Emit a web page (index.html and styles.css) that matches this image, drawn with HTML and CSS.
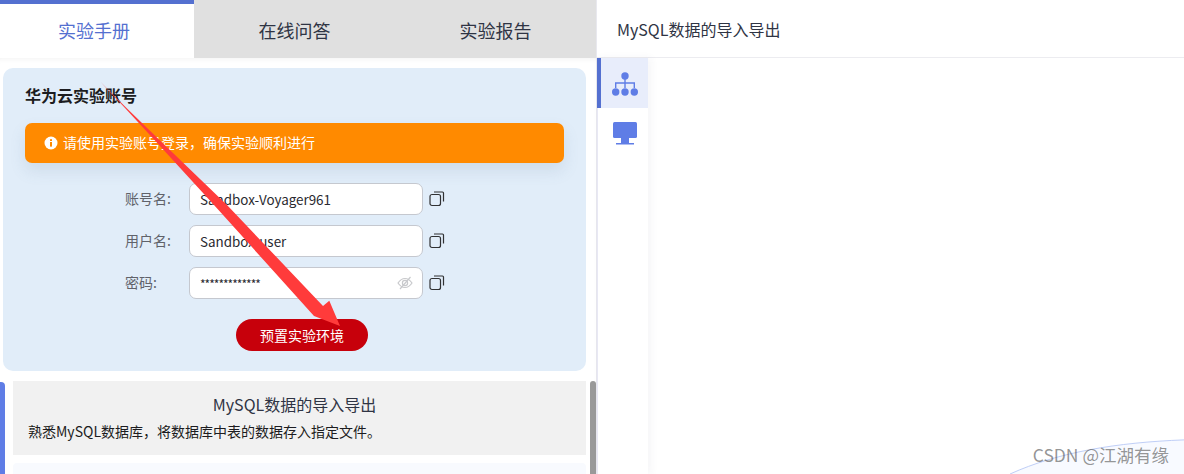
FILE: index.html
```html
<!DOCTYPE html>
<html lang="zh-CN">
<head>
<meta charset="utf-8">
<title>MySQL数据的导入导出</title>
<link rel="stylesheet" href="styles.css">
</head>
<body>
<div class="app">
  <section class="left">
    <nav class="tabs">
      <div class="tab active">实验手册</div>
      <div class="tab-rest">
        <div class="tab">在线问答</div>
        <div class="tab">实验报告</div>
      </div>
    </nav>
    <div class="left-body">
      <div class="account">
        <h2 class="account-title">华为云实验账号</h2>
        <div class="alert">
          <svg class="alert-icon" viewBox="0 0 14 14"><circle cx="7" cy="7" r="6.5" fill="#fff"/><rect x="6" y="6" width="2" height="4.6" fill="#ff8a00"/><rect x="6" y="3.2" width="2" height="1.8" fill="#ff8a00"/></svg>
          <span>请使用实验账号登录&#xFF0C;确保实验顺利进行</span>
        </div>
        <div class="form">
          <div class="row">
            <label class="label">账号名:</label>
            <div class="input">Sandbox-Voyager961</div>
            <svg class="copy" viewBox="0 0 16 16"><rect x="1" y="3.5" width="10.500" height="11" rx="2" fill="none" stroke="#303133" stroke-width="1.200"/><path d="M5 1h8.500a1 1 0 0 1 1 1v8.500" fill="none" stroke="#303133" stroke-width="1.200"/></svg>
          </div>
          <div class="row">
            <label class="label">用户名:</label>
            <div class="input">Sandbox-user</div>
            <svg class="copy" viewBox="0 0 16 16"><rect x="1" y="3.5" width="10.500" height="11" rx="2" fill="none" stroke="#303133" stroke-width="1.200"/><path d="M5 1h8.500a1 1 0 0 1 1 1v8.500" fill="none" stroke="#303133" stroke-width="1.200"/></svg>
          </div>
          <div class="row">
            <label class="label">密码:</label>
            <div class="input password"><span class="stars">*************</span>
              <svg class="eye" viewBox="0 0 16 16"><path d="M1 8c2-3 4.300-4.500 7-4.500S13 5 15 8c-2 3-4.300 4.500-7 4.500S3 11 1 8z" fill="none" stroke="#c8c9cc" stroke-width="1.200"/><circle cx="8" cy="8" r="2.600" fill="none" stroke="#c8c9cc" stroke-width="1.200"/><path d="M3 14L13.500 2" stroke="#c8c9cc" stroke-width="1.200"/></svg>
            </div>
            <svg class="copy" viewBox="0 0 16 16"><rect x="1" y="3.5" width="10.500" height="11" rx="2" fill="none" stroke="#303133" stroke-width="1.200"/><path d="M5 1h8.500a1 1 0 0 1 1 1v8.500" fill="none" stroke="#303133" stroke-width="1.200"/></svg>
          </div>
        </div>
        <div class="actions"><button class="primary">预置实验环境</button></div>
      </div>
      <div class="lower">
        <div class="step-marker"></div>
        <div class="cards">
          <div class="card">
            <h3 class="card-title">MySQL数据的导入导出</h3>
            <p class="card-desc">熟悉MySQL数据库&#xFF0C;将数据库中表的数据存入指定文件。</p>
          </div>
          <div class="card-next"></div>
        </div>
        <div class="scrollbar"></div>
      </div>
    </div>
  </section>
  <section class="right">
    <header class="right-head">MySQL数据的导入导出</header>
    <div class="right-body">
      <aside class="rail">
        <div class="rail-item selected">
          <svg class="rail-icon" viewBox="0 0 26 26"><circle cx="13" cy="6" r="3.700" fill="#5f7de6"/><path d="M13 9v9M3.700 18v-5h18.600v5" fill="none" stroke="#5f7de6" stroke-width="1.400"/><circle cx="3.700" cy="22" r="3.700" fill="#5f7de6"/><circle cx="13" cy="22" r="3.700" fill="#5f7de6"/><circle cx="22.300" cy="22" r="3.700" fill="#5f7de6"/></svg>
        </div>
        <div class="rail-item plain">
          <svg class="rail-icon" viewBox="0 0 26 26"><rect x="1" y="2" width="24" height="16" rx="1.500" fill="#5f7de6"/><rect x="9" y="18" width="8" height="5" fill="#5f7de6"/><rect x="4" y="23" width="18" height="1.500" fill="#5f7de6"/></svg>
        </div>
        <div class="rail-fill"></div>
      </aside>
      <main class="canvas">
        <svg class="curve" viewBox="0 0 180 40" preserveAspectRatio="none"><path d="M0 40C50 15 110 4 180 1V40z" fill="#f8faff"/><path d="M0 40C50 15 110 4 180 1" fill="none" stroke="#b9caf5" stroke-width="1"/></svg>
      </main>
    </div>
  </section>
</div>
<svg class="arrow" viewBox="0 0 1184 474"><polygon points="100.500,82 126.500,108 159.500,140 227,205 323,306 329.300,300.700 340,326 314,316 214,205 154.500,140 125,108" fill="#ff3b3b"/></svg>
<div class="watermark">CSDN @江湖有缘</div>
</body>
</html>
```
FILE: styles.css
```css
* { box-sizing: border-box; }
html, body { margin: 0; height: 474px; overflow: hidden; background: #fff; }
body { font-family: "Noto Sans CJK SC", "Noto Sans", sans-serif; color: #2f3444; }
.app { display: flex; height: 474px; }

.left { width: 597px; flex: none; border-right: 1px solid #e8e8ee; display: flex; flex-direction: column; }
.tabs { display: flex; height: 58px; flex: none; }
.tab { font-size: 18px; line-height: 60px; text-align: center; height: 58px; }
.tab.active { width: 194px; padding-right: 6px; color: #5470d0; border-top: 4px solid #5470d0; line-height: 52px; background: #fff; }
.tab-rest { flex: 1; display: flex; background: #e0e0e0; }
.tab-rest .tab { width: 201px; }

.left-body { flex: 1; padding: 10px 0 0 3px; overflow: hidden; box-shadow: inset 0 6px 6px -6px #eee; }
.account { width: 583px; height: 303px; background: #e1edf9; border-radius: 10px; padding: 15px 22px 0; }
.account-title { margin: 0; font-size: 16px; line-height: 24px; font-weight: 700; color: #1c1c20; }
.alert { margin-top: 16px; height: 40px; border-radius: 7px; background: #ff8a00; color: #fff; font-size: 14px; line-height: 38px; display: flex; align-items: center; gap: 5px; padding-left: 19px; box-shadow: 0 8px 16px rgba(90, 120, 150, .14); }
.alert span { height: 40px; }
.alert-icon { width: 14px; height: 14px; }
.form { margin-top: 20px; display: flex; flex-direction: column; gap: 10px; }
.row { display: flex; align-items: center; height: 32px; }
.label { flex: none; width: 164px; padding-left: 100px; padding-bottom: 2px; font-size: 14px; color: #60626a; white-space: nowrap; }
.input { width: 234px; height: 32px; border: 1px solid #c5c8cf; border-radius: 7px; background: #fff; font-size: 13.400px; padding-left: 10px; color: #2a2a30; display: flex; align-items: center; justify-content: space-between; }
.stars { font-size: 12px; letter-spacing: -1px; }
.eye { width: 16px; height: 16px; margin-right: 9px; }
.copy { width: 16px; height: 16px; margin-left: 6px; }
.actions { display: flex; justify-content: center; margin-top: 20px; padding-left: 15px; }
.primary { width: 132px; height: 32px; border: 0; border-radius: 16px; background: #c7000b; color: #fff; font: 14px "Noto Sans CJK SC", sans-serif; }

.lower { display: flex; margin: 10px 0 0 -3px; }
.step-marker { width: 5px; height: 92px; margin-top: 1px; background: #5f7de6; border-radius: 0 4px 0 0; flex: none; }
.cards { width: 573px; margin-left: 8px; flex: none; }
.card { height: 74px; background: #f1f1f1; padding: 12px 15px 0; }
.card-title { margin: 0; padding-right: 10px; text-align: center; font-size: 16px; line-height: 22px; font-weight: 400; }
.card-desc { margin: 6px 0 0; font-size: 14px; line-height: 20px; color: #1c1c20; }
.card-next { height: 20px; margin-top: 8px; background: #f8fafe; border-radius: 4px 4px 0 0; }
.scrollbar { width: 6px; height: 93px; margin-left: 4px; background: #999; border-radius: 3px 3px 0 0; flex: none; }

.right { flex: 1; display: flex; flex-direction: column; min-width: 0; }
.right-head { height: 58px; flex: none; border-bottom: 1px solid #ececf0; padding-left: 20px; font-size: 16px; line-height: 58px; color: #2f3444; }
.right-body { flex: 1; display: flex; min-height: 0; }
.rail { width: 51px; flex: none; background: #fff; box-shadow: 3px 0 8px rgba(60, 60, 90, .05); display: flex; flex-direction: column; }
.rail-item { height: 50px; display: flex; align-items: center; justify-content: center; flex: none; }
.rail-item.selected { background: #e8edfb; border-left: 4px solid #5470d0; }
.rail-item.plain { border-left: 1px solid #e8e8f4; padding-left: 3px; }
.rail-fill { flex: 1; border-left: 1px solid #e8e8f4; }
.rail-icon { width: 26px; height: 26px; }
.canvas { flex: 1; position: relative; overflow: hidden; }
.curve { position: absolute; right: 0; bottom: 0; width: 174px; height: 35px; }

.arrow { position: absolute; left: 0; top: 0; width: 1184px; height: 474px; pointer-events: none; }
.watermark { position: absolute; right: 15px; top: 444px; font: 17.500px/22px "Noto Sans CJK SC", "Liberation Sans", sans-serif; color: rgba(90, 90, 90, .65); }
```
